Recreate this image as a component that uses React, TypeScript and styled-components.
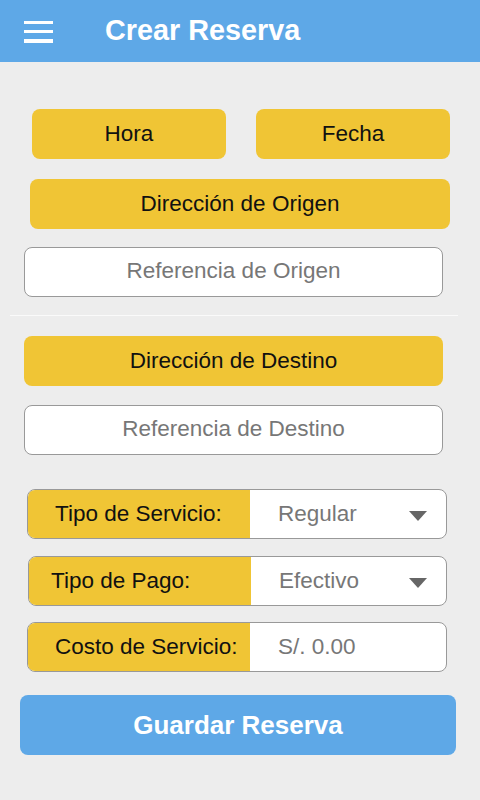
import React from 'react';
import styled, { createGlobalStyle } from 'styled-components';

const GlobalStyle = createGlobalStyle`
	html, body {
		margin: 0;
		padding: 0;
		background: #ededed;
		font-family: "Liberation Sans", Arial, sans-serif;
	}
	* {
		box-sizing: border-box;
	}
`

type InsetProps = {
	$top: number
	$left: number
	$right: number
}

type SelectRowProps = InsetProps & {
	label: string
	value: string
	labelPad: number
	arrow?: boolean
}

const SelectRow = ({ label, value, labelPad, arrow, ...inset }: SelectRowProps) => {
	return (
		<Row {...inset}>
			<RowLabel $pad={labelPad}>{label}</RowLabel>
			<RowValue>
				<span>{value}</span>
				{arrow && <Caret />}
			</RowValue>
		</Row>
	)
}

export default function App() {
	return (
		<Page>
			<GlobalStyle />
			<Header>
				<MenuButton aria-label="menu">
					<span></span>
					<span></span>
					<span></span>
				</MenuButton>
				<Title>Crear Reserva</Title>
			</Header>
			<Form>
				<ButtonPair>
					<YellowButton $w={194}>Hora</YellowButton>
					<YellowButton $w={194}>Fecha</YellowButton>
				</ButtonPair>
				<BlockButton $top={20} $left={30} $right={30}>Dirección de Origen</BlockButton>
				<RefInput $top={18} $left={24} $right={37}>Referencia de Origen</RefInput>
				<Divider />
				<BlockButton $top={20} $left={24} $right={37}>Dirección de Destino</BlockButton>
				<RefInput $top={19} $left={24} $right={37}>Referencia de Destino</RefInput>
				<SelectRow $top={34} $left={27} $right={33} label="Tipo de Servicio:" labelPad={27} value="Regular" arrow />
				<SelectRow $top={17} $left={28} $right={33} label="Tipo de Pago:" labelPad={22} value="Efectivo" arrow />
				<SelectRow $top={16} $left={27} $right={33} label="Costo de Servicio:" labelPad={27} value="S/. 0.00" />
				<SaveButton>Guardar Reserva</SaveButton>
			</Form>
		</Page>
	)
}

const Page = styled.div`
	width: 480px;
	min-height: 800px;
	background: #ededed;
`

const Header = styled.header`
	height: 62px;
	background: #5ea8e7;
	display: flex;
	align-items: center;
	padding-left: 24px;
`

const MenuButton = styled.button`
	width: 29px;
	height: 22px;
	padding: 0;
	border: none;
	background: none;
	display: flex;
	flex-direction: column;
	justify-content: space-between;
	margin-top: 1px;

	span {
		display: block;
		height: 3.5px;
		width: 100%;
		background: #fff;
	}
`

const Title = styled.h1`
	margin: 0 0 0 52px;
	color: #fff;
	font-size: 28.8px;
	font-weight: 700;
	line-height: 1;
	margin-top: -2px;
`

const Form = styled.main`
	display: flex;
	flex-direction: column;
	padding: 47px 0 40px;
`

const ButtonPair = styled.div`
	display: flex;
	gap: 30px;
	padding-left: 32px;
`

const YellowButton = styled.button<{ $w: number }>`
	width: ${p => p.$w}px;
	height: 50px;
	border: none;
	border-radius: 8px;
	background: #f0c535;
	color: #111;
	font-family: inherit;
	font-size: 22.5px;
	padding: 0;
`

const BlockButton = styled.button<InsetProps>`
	height: 50px;
	margin: ${p => p.$top}px ${p => p.$right}px 0 ${p => p.$left}px;
	border: none;
	border-radius: 8px;
	background: #f0c535;
	color: #111;
	font-family: inherit;
	font-size: 22.5px;
	padding: 0;
`

const RefInput = styled.div<InsetProps>`
	height: 50px;
	margin: ${p => p.$top}px ${p => p.$right}px 0 ${p => p.$left}px;
	border: 1px solid #999;
	border-radius: 8px;
	background: #fff;
	color: #777;
	font-size: 22.5px;
	display: flex;
	align-items: center;
	justify-content: center;
	padding-bottom: 2px;
`

const Divider = styled.hr`
	margin: 18px 22px 0 10px;
	border: none;
	height: 1px;
	background: #fafafa;
`

const Row = styled.div<InsetProps>`
	height: 50px;
	margin: ${p => p.$top}px ${p => p.$right}px 0 ${p => p.$left}px;
	border: 1px solid #999;
	border-radius: 8px;
	background: #fff;
	display: flex;
	overflow: hidden;
`

const RowLabel = styled.div<{ $pad: number }>`
	width: 222px;
	flex: 0 0 222px;
	background: #f0c535;
	color: #111;
	font-size: 22.5px;
	display: flex;
	align-items: center;
	padding-left: ${p => p.$pad}px;
	white-space: nowrap;
`

const RowValue = styled.div`
	flex: 1;
	display: flex;
	align-items: center;
	justify-content: space-between;
	padding: 0 19px 0 28px;
	color: #777;
	font-size: 22.5px;
`

const Caret = styled.span`
	width: 0;
	height: 0;
	border-left: 9.5px solid transparent;
	border-right: 9.5px solid transparent;
	border-top: 10px solid #666;
	margin-top: 4px;
`

const SaveButton = styled.button`
	height: 60px;
	margin: 23px 24px 0 20px;
	border: none;
	border-radius: 8px;
	background: #5ea8e7;
	color: #fff;
	font-family: inherit;
	font-size: 26px;
	font-weight: 700;
	padding: 0;
`
